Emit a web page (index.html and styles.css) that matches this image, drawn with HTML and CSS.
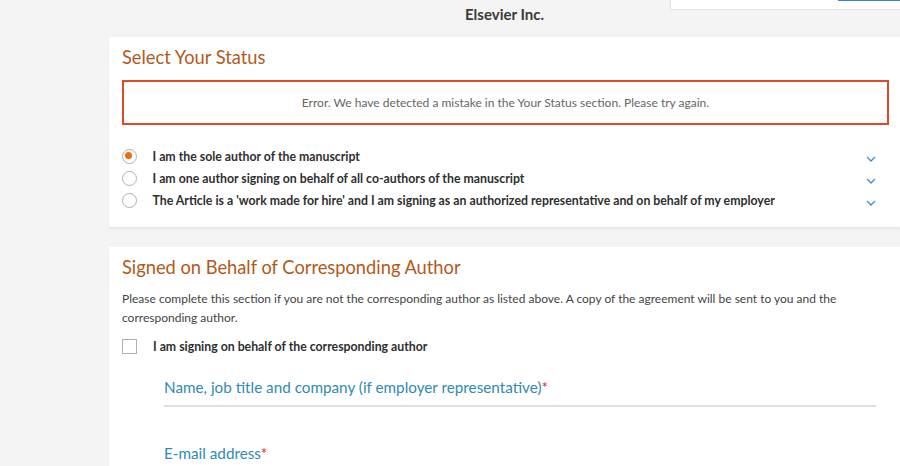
FILE: index.html
```html
<!DOCTYPE html>
<html>
<head>
<meta charset="utf-8">
<link rel="stylesheet" href="styles.css">
</head>
<body>
<div class="topbar">
  <div class="company">Elsevier Inc.</div>
  <div class="topbox"><span class="topbtn"></span></div>
</div>
<main class="content">
  <section class="card card-status">
    <h2 class="card-title">Select Your Status</h2>
    <div class="error-box">Error. We have detected a mistake in the Your Status section. Please try again.</div>
    <ul class="options">
      <li class="option">
        <span class="radio checked"></span>
        <span class="opt-label">I am the sole author of the manuscript</span>
        <svg class="chev" width="10" height="6" viewBox="0 0 10 6"><path d="M1 1l4 4 4-4" fill="none" stroke="#3f8fc7" stroke-width="1.3"/></svg>
      </li>
      <li class="option">
        <span class="radio"></span>
        <span class="opt-label">I am one author signing on behalf of all co-authors of the manuscript</span>
        <svg class="chev" width="10" height="6" viewBox="0 0 10 6"><path d="M1 1l4 4 4-4" fill="none" stroke="#3f8fc7" stroke-width="1.3"/></svg>
      </li>
      <li class="option">
        <span class="radio"></span>
        <span class="opt-label">The Article is a 'work made for hire' and I am signing as an authorized representative and on behalf of my employer</span>
        <svg class="chev" width="10" height="6" viewBox="0 0 10 6"><path d="M1 1l4 4 4-4" fill="none" stroke="#3f8fc7" stroke-width="1.3"/></svg>
      </li>
    </ul>
  </section>
  <section class="card card-behalf">
    <h2 class="card-title">Signed on Behalf of Corresponding Author</h2>
    <p class="intro">Please complete this section if you are not the corresponding author as listed above. A copy of the agreement will be sent to you and the corresponding author.</p>
    <div class="check-row">
      <span class="checkbox"></span>
      <span class="opt-label">I am signing on behalf of the corresponding author</span>
    </div>
    <div class="field field-name">
      <div class="field-label">Name, job title and company (if employer representative)<span class="req">*</span></div>
    </div>
    <div class="field field-email">
      <div class="field-label">E-mail address<span class="req">*</span></div>
    </div>
  </section>
</main>
</body>
</html>
```
FILE: styles.css
```css
html, body {
  margin: 0;
  padding: 0;
  background: #f4f4f4;
  font-family: Lato, "Open Sans", sans-serif;
  overflow: hidden;
}
.topbar {
  position: relative;
  height: 37px;
}
.company {
  position: absolute;
  left: 465px;
  top: 5px;
  font-size: 15px;
  font-weight: bold;
  color: #3a3a3a;
}
.topbox {
  position: absolute;
  left: 670px;
  top: 0;
  width: 240px;
  height: 9px;
  background: #fff;
  border: 1px solid #e2e2e2;
  border-top: none;
}
.topbtn {
  position: absolute;
  left: 167px;
  top: 0;
  width: 80px;
  height: 1px;
  background: #2f86e6;
}
.content {
  margin-left: 109px;
  display: flex;
  flex-direction: column;
  gap: 20px;
}
.card {
  background: #fff;
  box-shadow: 0 2px 2px rgba(0,0,0,0.06);
  padding: 8px 12px 12px 13px;
}
.card-status {
  height: 170px;
}
.card-title {
  margin: 0;
  font-size: 18.3px;
  font-weight: normal;
  color: #b3591a;
  line-height: 24px;
}
.error-box {
  margin-top: 11px;
  height: 41px;
  border: 2px solid #e0482a;
  display: flex;
  align-items: center;
  justify-content: center;
  font-size: 12px;
  color: #666;
  width: 763px;
}
.options {
  list-style: none;
  margin: 20px 0 0;
  padding: 0;
  display: flex;
  flex-direction: column;
  width: 754px;
}
.option {
  display: flex;
  align-items: center;
  height: 22px;
}
.radio {
  width: 15px;
  height: 15px;
  border: 1.5px solid #b0b0b0;
  border-radius: 50%;
  box-sizing: border-box;
  flex: none;
  margin-left: -0.5px;
  position: relative;
}
.radio.checked::after {
  content: "";
  position: absolute;
  left: 2.5px;
  top: 2.5px;
  width: 7px;
  height: 7px;
  border-radius: 50%;
  background: #f26a10;
}
.opt-label {
  margin-left: 16px;
  font-size: 12.3px;
  font-weight: bold;
  color: #2f2f2f;
  flex: 1;
}
.chev {
  margin-top: 6px;
  flex: none;
}
.intro {
  margin: 10px 0 0;
  font-size: 12px;
  line-height: 19px;
  color: #444;
  width: 740px;
}
.check-row {
  display: flex;
  align-items: center;
  margin-top: 12px;
}
.checkbox {
  width: 15px;
  height: 15px;
  border: 1.5px solid #b0b0b0;
  box-sizing: border-box;
  flex: none;
}
.field {
  margin-left: 42px;
  width: 712px;
}
.field-label {
  font-size: 15.25px;
  color: #2f8ab5;
}
.field-name .field-label {
  padding-top: 24px;
  padding-bottom: 9px;
  border-bottom: 2px solid #e0e0e0;
}
.field-email .field-label {
  padding-top: 37px;
}
.req {
  color: #e2231a;
}
```
